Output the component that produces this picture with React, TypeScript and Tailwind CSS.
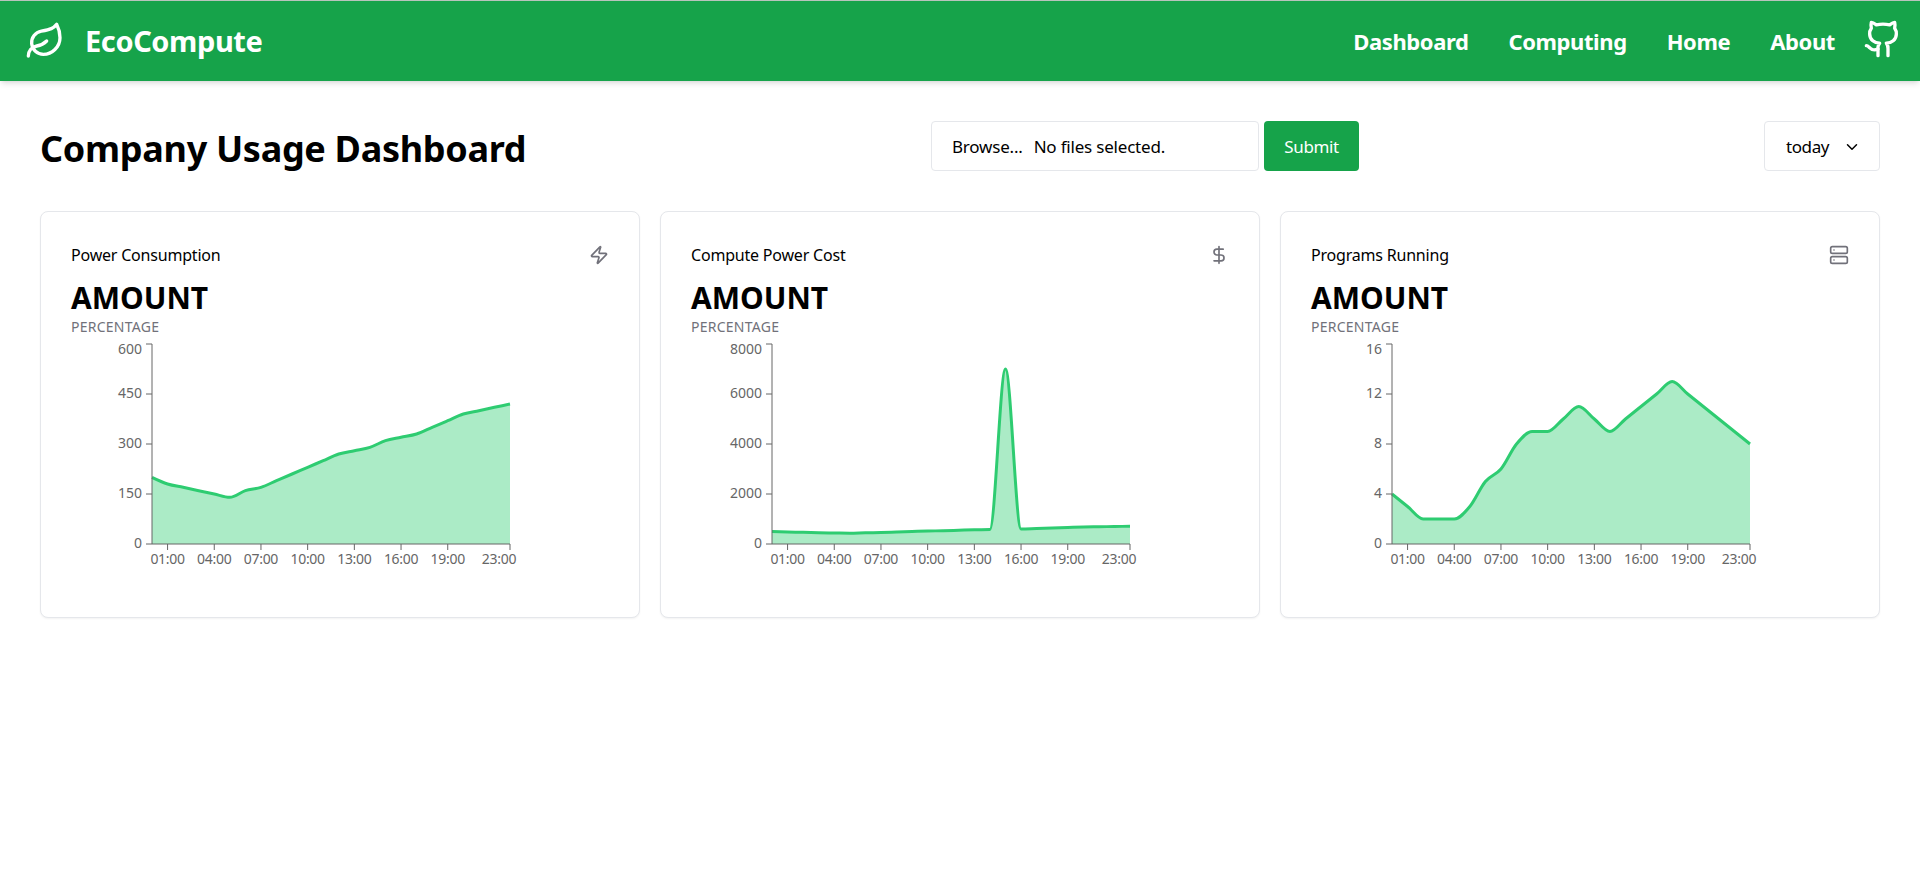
import { Leaf, Github, Zap, DollarSign, Server, ChevronDown } from "lucide-react";
import type { ReactNode } from "react";

const W = 470;
const H = 240;
const X0 = 81;
const PW = 358;
const Y0 = 4;
const PH = 200;

function monotone(pts: [number, number][]): string {
  const n = pts.length;
  const dx: number[] = [];
  const s: number[] = [];
  for (let i = 0; i < n - 1; i++) {
    dx[i] = pts[i + 1][0] - pts[i][0];
    s[i] = (pts[i + 1][1] - pts[i][1]) / dx[i];
  }
  const sign = (v: number) => (v < 0 ? -1 : 1);
  const t: number[] = [];
  for (let i = 1; i < n - 1; i++) {
    const p = (s[i - 1] * dx[i] + s[i] * dx[i - 1]) / (dx[i - 1] + dx[i]);
    t[i] = (sign(s[i - 1]) + sign(s[i])) * Math.min(Math.abs(s[i - 1]), Math.abs(s[i]), 0.5 * Math.abs(p)) || 0;
  }
  t[0] = (3 * s[0] - t[1]) / 2;
  t[n - 1] = (3 * s[n - 2] - t[n - 2]) / 2;
  let d = `M${pts[0][0]},${pts[0][1]}`;
  for (let i = 0; i < n - 1; i++) {
    const h = dx[i] / 3;
    d += `C${pts[i][0] + h},${pts[i][1] + h * t[i]} ${pts[i + 1][0] - h},${pts[i + 1][1] - h * t[i + 1]} ${pts[i + 1][0]},${pts[i + 1][1]}`;
  }
  return d;
}

const xTicks = [
  { h: 1, l: "01:00", o: 0 },
  { h: 4, l: "04:00", o: 0 },
  { h: 7, l: "07:00", o: 0 },
  { h: 10, l: "10:00", o: 0 },
  { h: 13, l: "13:00", o: 0 },
  { h: 16, l: "16:00", o: 0 },
  { h: 19, l: "19:00", o: 0 },
  { h: 23, l: "23:00", o: -11 },
];

function Chart({ data, max, ticks }: { data: number[]; max: number; ticks: number[] }) {
  const px = (h: number) => X0 + (h / 23) * PW;
  const py = (v: number) => Y0 + PH - (v / max) * PH;
  const pts = data.map((v, i) => [px(i), py(v)] as [number, number]);
  const line = monotone(pts);
  const bottom = Y0 + PH;
  return (
    <svg width={W} height={H} className="mt-[3px] block">
      <path d={`${line}L${px(23)},${bottom}L${px(0)},${bottom}Z`} fill="#2ecc71" fillOpacity={0.4} />
      <path d={line} fill="none" stroke="#2ecc71" strokeWidth={3} />
      <path d={`M${X0},${Y0}V${bottom}H${X0 + PW}`} fill="none" stroke="#666666" />
      {ticks.map((t, i) => {
        const y = py(t);
        return (
          <g key={t}>
            <line x1={X0 - 6} x2={X0} y1={y} y2={y} stroke="#666666" />
            <text
              x={X0 - 10}
              y={i === ticks.length - 1 ? y + 10 : y + 4}
              textAnchor="end"
              fontSize={14}
              fill="#666666"
            >
              {t}
            </text>
          </g>
        );
      })}
      {xTicks.map((t) => (
        <g key={t.l}>
          <line x1={px(t.h)} x2={px(t.h)} y1={bottom} y2={bottom + 6} stroke="#666666" />
          <text x={px(t.h) + t.o} y={bottom + 20} textAnchor="middle" fontSize={14} letterSpacing={-0.3} fill="#666666">
            {t.l}
          </text>
        </g>
      ))}
    </svg>
  );
}

function Card({ title, icon, children }: { title: string; icon: ReactNode; children: ReactNode }) {
  return (
    <div className="h-[407px] rounded-lg border border-[#e5e7eb] bg-white px-[30px] pt-[27px] shadow-xs">
      <div className="flex h-8 items-center justify-between text-[#71717a]">
        <h3 className="text-base tracking-[-0.2px] text-black">{title}</h3>
        {icon}
      </div>
      <div className="mt-[9px] text-[30px] leading-9 font-bold text-black">AMOUNT</div>
      <p className="mt-px text-sm leading-5 tracking-[0.25px] text-[#71717a]">PERCENTAGE</p>
      {children}
    </div>
  );
}

const power = [200, 180, 170, 160, 150, 140, 160, 170, 190, 210, 230, 250, 270, 280, 290, 310, 320, 330, 350, 370, 390, 400, 410, 420];
const cost = [500, 480, 470, 450, 440, 430, 450, 460, 480, 500, 520, 530, 550, 570, 580, 7000, 600, 620, 640, 660, 680, 690, 700, 710];
const programs = [4, 3, 2, 2, 2, 3, 5, 6, 8, 9, 9, 10, 11, 10, 9, 10, 11, 12, 13, 12, 11, 10, 9, 8];

const navLink = "ml-10 text-[22px] font-bold tracking-[-0.4px]";

export default function App() {
  return (
    <div className="min-h-[890px] bg-white font-['Noto_Sans',sans-serif] text-black">
      <nav className="flex h-[81px] items-center justify-between border-t border-[#b8c4bc] bg-[#16a34a] pr-[17px] pl-[25px] text-white shadow-md">
        <div className="flex items-center gap-[20px]">
          <Leaf size={40} strokeWidth={2} />
          <span className="text-[29px] font-bold tracking-[-0.4px]">EcoCompute</span>
        </div>
        <div className="flex items-center">
          <a className={navLink}>Dashboard</a>
          <a className={navLink}>Computing</a>
          <a className={navLink}>Home</a>
          <a className={navLink}>About</a>
          <Github size={40} strokeWidth={2} className="mb-[5px] ml-7" />
        </div>
      </nav>
      <main className="px-10 pt-10">
        <div className="flex h-[50px] items-center justify-between">
          <h1 className="w-[891px] pt-[5px] text-[36px] font-bold tracking-[-0.3px]">Company Usage Dashboard</h1>
          <div className="flex flex-1 gap-[5px]">
            <div className="flex h-[50px] w-[328px] items-center rounded border border-[#e5e7eb] pt-[2px] pl-5 text-[17px] tracking-[-0.2px]">
              <span>Browse...</span>
              <span className="ml-[11px]">No files selected.</span>
            </div>
            <button className="h-[50px] w-[95px] rounded bg-[#16a34a] pt-[2px] text-[17px] tracking-[-0.4px] text-white">Submit</button>
          </div>
          <div className="flex h-[50px] w-[116px] items-center gap-[14px] rounded border border-[#e5e7eb] pt-[2px] pl-[21px] text-[17px] tracking-[-0.4px]">
            <span>today</span>
            <ChevronDown size={18} />
          </div>
        </div>
        <div className="mt-10 grid grid-cols-3 gap-5">
          <Card title="Power Consumption" icon={<Zap size={20} />}>
            <Chart data={power} max={600} ticks={[0, 150, 300, 450, 600]} />
          </Card>
          <Card title="Compute Power Cost" icon={<DollarSign size={20} />}>
            <Chart data={cost} max={8000} ticks={[0, 2000, 4000, 6000, 8000]} />
          </Card>
          <Card title="Programs Running" icon={<Server size={20} />}>
            <Chart data={programs} max={16} ticks={[0, 4, 8, 12, 16]} />
          </Card>
        </div>
      </main>
    </div>
  );
}
